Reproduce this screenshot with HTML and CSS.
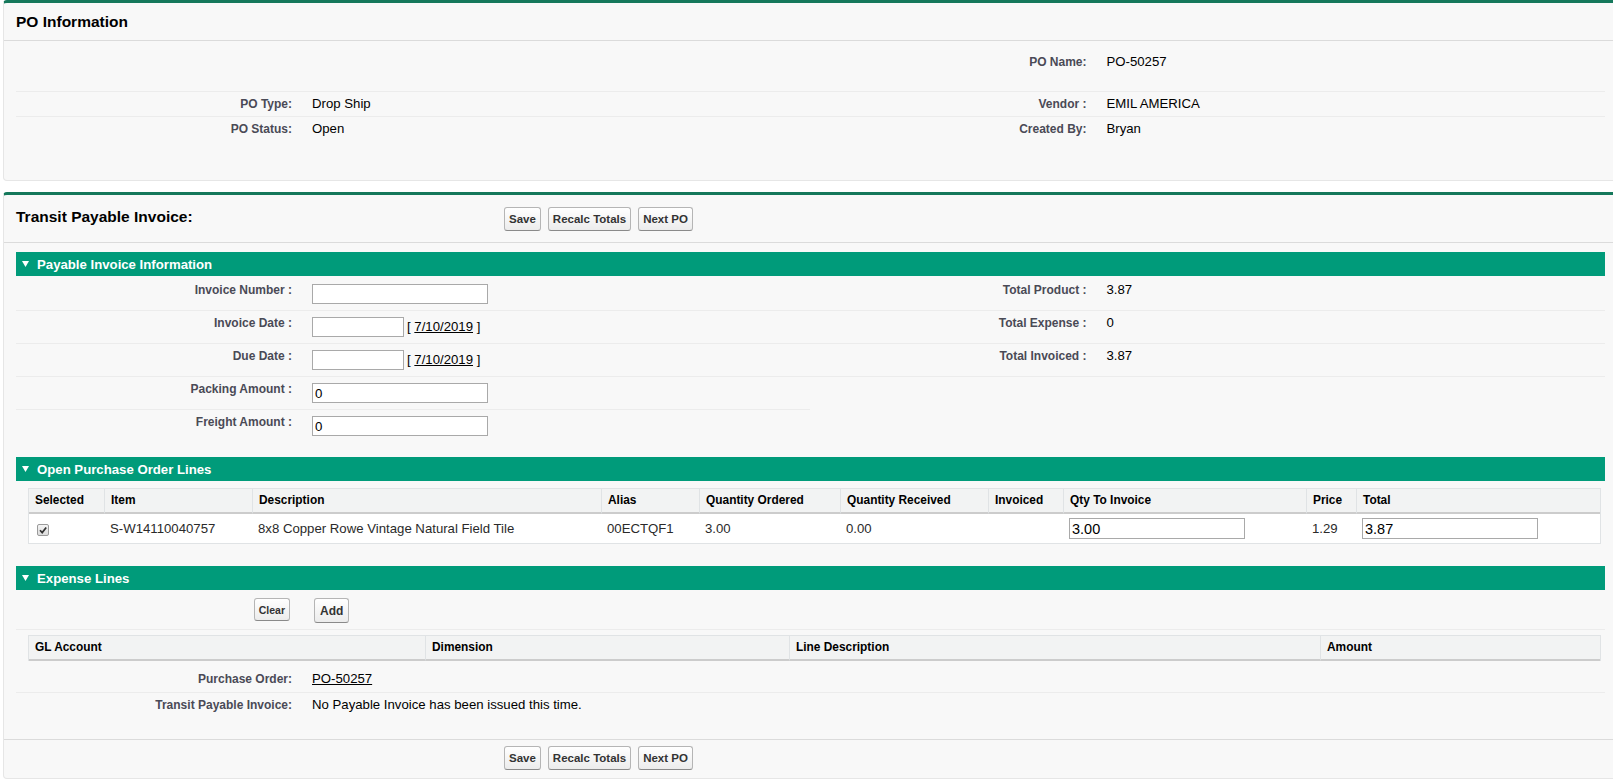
FILE: index.html
```html
<!DOCTYPE html>
<html>
<head>
<meta charset="utf-8">
<title>Transit Payable Invoice</title>
<link rel="stylesheet" href="styles.css">
</head>
<body>
<div class="page">
  <div class="panel">
    <div class="phead">
      <h2 class="ptitle">PO Information</h2>
    </div>
    <div class="pbody pbody-top">
      <div class="dl">
        <div class="lbl r1"></div><div class="val r1"></div><div class="lbl r1">PO Name:</div><div class="val r1">PO-50257</div>
        <div class="lbl">PO Type:</div><div class="val">Drop Ship</div><div class="lbl">Vendor :</div><div class="val">EMIL AMERICA</div>
        <div class="lbl nb">PO Status:</div><div class="val nb">Open</div><div class="lbl nb">Created By:</div><div class="val nb">Bryan</div>
      </div>
    </div>
  </div>

  <div class="panel panel2">
    <div class="phead phead2">
      <h2 class="ptitle t2">Transit Payable Invoice:</h2>
      <div class="btns">
        <button class="btn">Save</button>
        <button class="btn">Recalc Totals</button>
        <button class="btn">Next PO</button>
      </div>
    </div>
    <div class="pbody pbody-main">
      <div class="bar"><svg class="twisty" width="7" height="6" viewBox="0 0 7 6"><polygon points="0,0 7,0 3.5,6" fill="#fff"/></svg><span>Payable Invoice Information</span></div>
      <div class="dl form">
        <div class="lbl">Invoice Number :</div>
        <div class="val inp"><input class="txt" type="text"></div>
        <div class="lbl">Total Product :</div>
        <div class="val">3.87</div>

        <div class="lbl">Invoice Date :</div>
        <div class="val inp"><div class="date"><input class="txt dt" type="text"><span class="dlink">[ <a href="#">7/10/2019</a> ]</span></div></div>
        <div class="lbl">Total Expense :</div>
        <div class="val">0</div>

        <div class="lbl">Due Date :</div>
        <div class="val inp"><div class="date"><input class="txt dt" type="text"><span class="dlink">[ <a href="#">7/10/2019</a> ]</span></div></div>
        <div class="lbl">Total Invoiced :</div>
        <div class="val">3.87</div>

        <div class="lbl">Packing Amount :</div>
        <div class="val inp"><input class="txt" type="text" value="0"></div>
        <div class="lbl nb"></div>
        <div class="val nb"></div>

        <div class="lbl nb">Freight Amount :</div>
        <div class="val inp nb"><input class="txt" type="text" value="0"></div>
        <div class="lbl nb"></div>
        <div class="val nb"></div>
      </div>

      <div class="bar"><svg class="twisty" width="7" height="6" viewBox="0 0 7 6"><polygon points="0,0 7,0 3.5,6" fill="#fff"/></svg><span>Open Purchase Order Lines</span></div>
      <div class="tblwrap lines">
        <table class="list">
          <colgroup>
            <col style="width:75px"><col style="width:148px"><col style="width:349px"><col style="width:98px"><col style="width:141px"><col style="width:148px"><col style="width:75px"><col style="width:243px"><col style="width:50px"><col>
          </colgroup>
          <thead>
            <tr><th>Selected</th><th>Item</th><th>Description</th><th>Alias</th><th>Quantity Ordered</th><th>Quantity Received</th><th>Invoiced</th><th>Qty To Invoice</th><th>Price</th><th>Total</th></tr>
          </thead>
          <tbody>
            <tr>
              <td><span class="chk" role="checkbox" aria-checked="true"><svg width="10" height="10" viewBox="0 0 10 10"><path d="M2 5.2 L4.2 7.6 L8.2 2.4" fill="none" stroke="#333" stroke-width="1.7"/></svg></span></td>
              <td>S-W14110040757</td>
              <td>8x8 Copper Rowe Vintage Natural Field Tile</td>
              <td>00ECTQF1</td>
              <td>3.00</td>
              <td>0.00</td>
              <td></td>
              <td><input class="tin" type="text" value="3.00"></td>
              <td>1.29</td>
              <td><input class="tin" type="text" value="3.87"></td>
            </tr>
          </tbody>
        </table>
      </div>

      <div class="bar"><svg class="twisty" width="7" height="6" viewBox="0 0 7 6"><polygon points="0,0 7,0 3.5,6" fill="#fff"/></svg><span>Expense Lines</span></div>
      <div class="dl">
        <div class="lbl brow"><button class="btn btn-clear">Clear</button></div>
        <div class="val brow"><button class="btn btn-add">Add</button></div>
        <div class="lbl brow"></div>
        <div class="val brow"></div>
      </div>
      <div class="tblwrap gl">
        <table class="list">
          <colgroup>
            <col style="width:396px"><col style="width:364px"><col style="width:531px"><col>
          </colgroup>
          <thead>
            <tr><th>GL Account</th><th>Dimension</th><th>Line Description</th><th>Amount</th></tr>
          </thead>
        </table>
      </div>
      <div class="dl">
        <div class="lbl por">Purchase Order:</div>
        <div class="val por"><a href="#">PO-50257</a></div>
        <div class="lbl por"></div>
        <div class="val por"></div>

        <div class="lbl nb">Transit Payable Invoice:</div>
        <div class="val nb">No Payable Invoice has been issued this time.</div>
        <div class="lbl nb"></div>
        <div class="val nb"></div>
      </div>
    </div>
    <div class="pfoot">
      <div class="spacer"></div>
      <div class="btns">
        <button class="btn">Save</button>
        <button class="btn">Recalc Totals</button>
        <button class="btn">Next PO</button>
      </div>
    </div>
  </div>
</div>
</body>
</html>
```
FILE: styles.css
```css
html, body {
  margin: 0;
  padding: 0;
  overflow: hidden;
  background: #ffffff;
}
body {
  font-family: "Liberation Sans", Arial, sans-serif;
  color: #000;
}
.page {
  width: 1615px;
  margin-left: 3px;
}
.panel {
  box-sizing: border-box;
  background: #f8f8f8;
  border: 1px solid #e6e6e6;
  border-top: 3px solid #15785b;
  border-radius: 4px;
}
.panel2 {
  margin-top: 11px;
}
.phead {
  height: 37px;
  border-bottom: 1px solid #dbdbdb;
  display: flex;
  align-items: center;
}
.phead2 {
  height: 47px;
}
.ptitle {
  margin: 0;
  padding-left: 12px;
  font-size: 15.5px;
  font-weight: bold;
  color: #000;
  line-height: 18px;
}
.t2 {
  box-sizing: border-box;
  width: 500px;
  flex: none;
  padding-bottom: 3px;
}
.btns {
  display: flex;
  gap: 7px;
  align-items: center;
}
.btn {
  box-sizing: border-box;
  height: 24px;
  padding: 0 4px;
  font-family: "Liberation Sans", Arial, sans-serif;
  font-size: 11.5px;
  font-weight: bold;
  color: #333;
  background: linear-gradient(#ffffff, #ececec);
  border: 1px solid #b5b5b5;
  border-bottom-color: #8a8a8a;
  border-radius: 3px;
  margin: 0;
}
.btn-clear {
  height: 23px;
  font-size: 10.5px;
  margin-right: 2px;
}
.btn-add {
  height: 25px;
  font-size: 12px;
  padding: 0 5px;
  margin-left: 2px;
}
.pbody {
  padding: 0 12px;
}
.pbody-top {
  padding-top: 9px;
  padding-bottom: 39px;
}
.pbody-main {
  padding-top: 9px;
  padding-bottom: 22px;
}
.dl {
  display: grid;
  grid-template-columns: 18% 32% 18% 32%;
}
.lbl, .val {
  box-sizing: border-box;
  line-height: 16px;
  border-bottom: 1px solid #ececec;
}
.lbl {
  text-align: right;
  padding: 4px 10px 4px 2px;
  font-size: 12px;
  font-weight: bold;
  color: #4a4a56;
}
.val {
  padding: 4px 10px;
  font-size: 13.2px;
  color: #000;
}
.nb {
  border-bottom: none;
}
.r1 {
  padding-bottom: 21px;
}
.val.inp {
  padding: 6px 10px;
}
.form {
  padding-top: 2px;
  padding-bottom: 15px;
}
.txt {
  box-sizing: border-box;
  display: block;
  width: 176px;
  height: 20px;
  padding: 1px 2px;
  border: 1px solid #a9a9a9;
  background: #fff;
  font-family: "Liberation Sans", Arial, sans-serif;
  font-size: 13.3px;
  color: #000;
  margin: 0;
}
.date {
  display: flex;
  align-items: center;
  gap: 3px;
}
.dt {
  width: 92px;
}
.dlink {
  font-size: 13.2px;
  white-space: nowrap;
}
a {
  color: #000;
  text-decoration: underline;
}
.bar {
  height: 24px;
  background: #009b7a;
  color: #fff;
  display: flex;
  align-items: center;
  font-size: 13.2px;
  font-weight: bold;
}
.twisty {
  margin-left: 6px;
  margin-right: 8px;
  flex: none;
}
.tblwrap {
  padding: 0 4px 0 12px;
}
.lines {
  margin-top: 7px;
  padding-bottom: 22px;
}
.gl {
  margin-top: 5px;
}
.list {
  width: 100%;
  table-layout: fixed;
  border-collapse: separate;
  border-spacing: 0;
  border: 1px solid #e0e3e5;
}
.gl .list {
  border-bottom: none;
}
.list th {
  background: #f2f3f3;
  text-align: left;
  font-size: 11.9px;
  font-weight: bold;
  color: #000;
  line-height: 15px;
  padding: 4px 6px;
  border-bottom: 2px solid #cccccc;
  border-left: 1px solid #e0e3e5;
  white-space: nowrap;
  overflow: hidden;
}
.list th:first-child {
  border-left: none;
}
.list td {
  background: #fff;
  font-size: 13.2px;
  color: #2a2a2a;
  line-height: 21px;
  padding: 4px 6px;
  white-space: nowrap;
  overflow: hidden;
  vertical-align: middle;
}
.chk {
  box-sizing: border-box;
  display: inline-flex;
  align-items: center;
  justify-content: center;
  width: 12px;
  height: 12px;
  margin-left: 2px;
  vertical-align: middle;
  border: 1px solid #9a9a9a;
  border-radius: 2px;
  background: linear-gradient(#f4f4f4, #dcdcdc);
}
.tin {
  box-sizing: border-box;
  display: block;
  width: 176px;
  height: 21px;
  padding: 1px 2px;
  border: 1px solid #a9a9a9;
  background: #fff;
  font-family: "Liberation Sans", Arial, sans-serif;
  font-size: 14.5px;
  color: #000;
  margin: 0;
}
.brow {
  padding-top: 8px;
  padding-bottom: 6px;
  line-height: normal;
}
.lbl.brow {
  padding-right: 10px;
}
.por {
  padding-top: 10px;
  padding-bottom: 5px;
}
.pfoot {
  border-top: 1px solid #dbdbdb;
  display: flex;
  padding-top: 6px;
  padding-bottom: 8px;
}
.spacer {
  width: 500px;
  flex: none;
}
```
